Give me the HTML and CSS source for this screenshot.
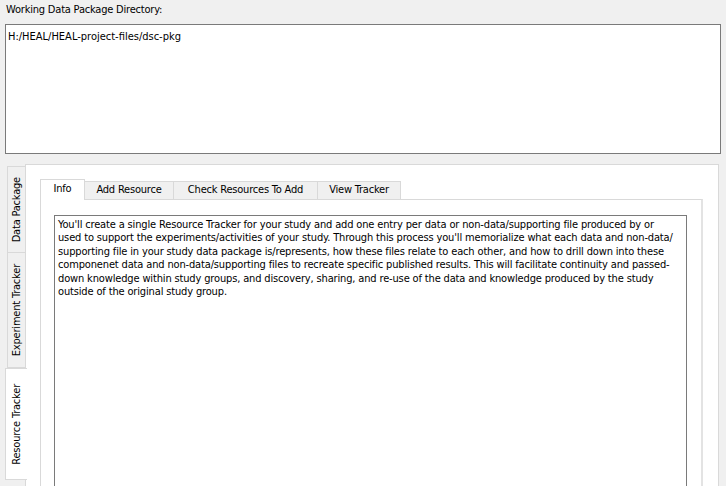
FILE: index.html
```html
<!DOCTYPE html>
<html>
<head>
<meta charset="utf-8">
<link rel="stylesheet" href="styles.css">
</head>
<body>
<div class="top">
  <div class="label">Working Data Package Directory:</div>
  <div class="dirbox">H:/HEAL/HEAL-project-files/dsc-pkg</div>
</div>
<div class="main">
  <div class="vtabs">
    <div class="vtab t1"><span>Data Package</span></div>
    <div class="vtab t2"><span>Experiment Tracker</span></div>
    <div class="vtab t3 sel"><span>Resource Tracker</span></div>
  </div>
  <div class="pane">
    <div class="htabs">
      <div class="htab sel w1">Info</div>
      <div class="htab w2">Add Resource</div>
      <div class="htab w3">Check Resources To Add</div>
      <div class="htab w4">View Tracker</div>
    </div>
    <div class="ipane">
      <div class="textedit">You'll create a single Resource Tracker for your study and add one entry per data or non-data/supporting file produced by or<br>used to support the experiments/activities of your study. Through this process you'll memorialize what each data and non-data/<br>supporting file in your study data package is/represents, how these files relate to each other, and how to drill down into these<br>componenet data and non-data/supporting files to recreate specific published results. This will facilitate continuity and passed-<br>down knowledge within study groups, and discovery, sharing, and re-use of the data and knowledge produced by the study<br>outside of the original study group.</div>
    </div>
  </div>
</div>
</body>
</html>
```
FILE: styles.css
```css
html, body {
  margin: 0;
  padding: 0;
  background: #f0f0f0;
  overflow: hidden;
  height: 486px;
}
body {
  font-family: "DejaVu Sans", Verdana, sans-serif;
  font-stretch: condensed;
  font-size: 11px;
  color: #000;
}
.top {
  padding: 3px 0 0 5px;
}
.label {
  height: 13px;
  line-height: 13px;
  padding-left: 1px;
  letter-spacing: -0.2px;
}
.dirbox {
  margin-top: 8px;
  width: 714px;
  background: #fff;
  border: 1px solid #7a7a7a;
  box-sizing: content-box;
  line-height: 13px;
  text-indent: 2px;
  padding-top: 5px;
  height: 123px;
  letter-spacing: 0;
}
.main {
  display: flex;
  margin-top: 10px;
  height: 330px;
}
.vtabs {
  display: flex;
  flex-direction: column;
  width: 20px;
  padding-top: 2px;
  padding-left: 5px;
  position: relative;
  z-index: 2;
}
.vtab {
  width: 18px;
  margin-left: 2px;
  box-sizing: border-box;
  background: #f0f0f0;
  border: 1px solid #d9d9d9;
  border-right: none;
  display: flex;
  align-items: center;
  justify-content: center;
}
.vtab span {
  writing-mode: vertical-rl;
  transform: rotate(180deg);
  white-space: nowrap;
  letter-spacing: -0.2px;
}
.t1 { height: 87px; }
.t2 { height: 115px; border-top: none; }
.t3 { height: 112px; }
.vtab.sel {
  background: #fff;
  width: 22px;
  margin-left: 0;
  margin-right: -1px;
}
.pane {
  flex: 1;
  margin-right: 7px;
  background: #fff;
  border: 1px solid #d9d9d9;
  border-bottom: none;
  padding: 14px 15px 0 14px;
  display: flex;
  flex-direction: column;
}
.htabs {
  display: flex;
  align-items: flex-end;
  height: 20px;
  position: relative;
  z-index: 2;
}
.htab {
  box-sizing: border-box;
  height: 18px;
  line-height: 16px;
  background: #f0f0f0;
  border: 1px solid #d9d9d9;
  border-left: none;
  border-bottom: none;
  text-align: center;
  white-space: nowrap;
  letter-spacing: -0.2px;
}
.htab.sel {
  background: #fff;
  height: 21px;
  margin-bottom: -1px;
  border-left: 1px solid #d9d9d9;
  line-height: 18px;
}
.w1 { width: 45px; }
.w2 { width: 89px; }
.w3 { width: 144px; }
.w4 { width: 83px; }
.ipane {
  flex: 1;
  background: #fff;
  border: 1px solid #d9d9d9;
  border-right: 2px solid #e3e3e3;
  border-bottom: none;
  padding: 15px 14px 0 13px;
  display: flex;
}
.textedit {
  flex: 1;
  border: 1px solid #7a7a7a;
  border-bottom: none;
  background: #fff;
  padding: 2px 3px;
  line-height: 13.4px;
  white-space: nowrap;
  letter-spacing: -0.15px;
}
```
